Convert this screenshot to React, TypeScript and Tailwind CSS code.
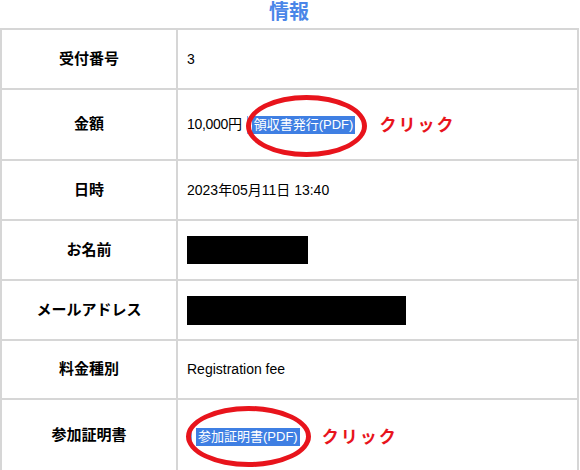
import type { ReactNode } from "react";

const jp = { fontFamily: '"Liberation Sans", "Noto Sans CJK JP", sans-serif' };

function PdfLink({ label }: { label: string }) {
  return (
    <span className="relative inline-flex items-center border-l border-[#7aa7ee] pl-1">
      <span className="bg-[#3f7fe3] px-[2px] text-[13px] leading-[18px] text-white">{label}</span>
    </span>
  );
}

function Ring({ className }: { className: string }) {
  return (
    <span
      className={`pointer-events-none absolute rounded-[50%] border-[5px] border-solid border-[#e8141c] ${className}`}
    />
  );
}

function Click() {
  return <span className="text-[17px] font-bold tracking-[2px] text-[#e8141c]">クリック</span>;
}

function Row({ label, h, children }: { label: string; h: string; children: ReactNode }) {
  return (
    <div className={`grid grid-cols-[176px_1fr] border-b-2 border-[#d6d6d6] ${h}`}>
      <div className="flex items-center justify-center border-r-2 border-[#d6d6d6] text-[15px] font-bold text-black">
        {label}
      </div>
      <div className="relative flex items-center pl-[9px] text-[14px] text-black">{children}</div>
    </div>
  );
}

export default function App() {
  return (
    <div className="h-[470px] w-[580px] overflow-hidden bg-white" style={jp}>
      <h2 className="flex h-[28px] items-start justify-center pr-[2px] text-[20px] font-bold leading-[24px] text-[#4a86e8]">
        情報
      </h2>
      <div className="w-[579px] border-x-2 border-t-2 border-[#d6d6d6]">
        <Row label="受付番号" h="h-[60px]">
          3
        </Row>
        <Row label="金額" h="h-[71px]">
          <span className="tracking-[-0.3px]">10,000円</span>
          <span className="ml-[5px]">
            <PdfLink label="領収書発行(PDF)" />
          </span>
          <span className="ml-[24px] pt-[2px]">
            <Click />
          </span>
          <Ring className="left-[68px] top-[5px] h-[62px] w-[121px]" />
        </Row>
        <Row label="日時" h="h-[60px]">
          <span>2023年05月11日 13:40</span>
        </Row>
        <Row label="お名前" h="h-[60px]">
          <span className="h-[28px] w-[121px] bg-black" />
        </Row>
        <Row label="メールアドレス" h="h-[60px]">
          <span className="h-[29px] w-[219px] bg-black" />
        </Row>
        <Row label="料金種別" h="h-[59px]">
          Registration fee
        </Row>
        <Row label="参加証明書" h="h-[72px]">
          <span className="ml-[4px] pt-[2px]">
            <PdfLink label="参加証明書(PDF)" />
          </span>
          <span className="ml-[22px] pt-[6px]">
            <Click />
          </span>
          <Ring className="left-[8px] top-[6px] h-[61px] w-[125px]" />
        </Row>
      </div>
    </div>
  );
}
